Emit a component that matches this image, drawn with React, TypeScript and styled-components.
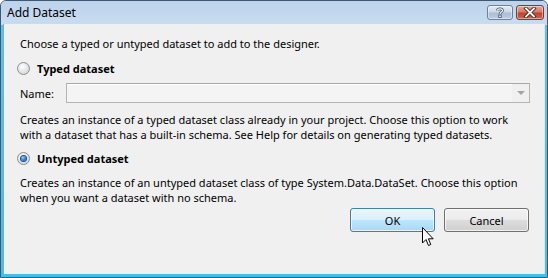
import React from 'react';
import styled, { createGlobalStyle } from 'styled-components';

const Global = createGlobalStyle`
    html, body {
        margin: 0;
        padding: 0;
        background: #ffffff;
    }
    body {
        font-family: "Noto Sans", "Open Sans", sans-serif;
        font-size: 11px;
        color: #000;
    }
`

const Window = styled.div`
    position: relative;
    width: 548px;
    height: 278px;
    box-sizing: border-box;
    border: 1px solid #3f5872;
    border-radius: 6px 6px 0 0;
    background: linear-gradient(to bottom, #b9d1ea 0px, #c6daf0 24px, #55c6ec 24px, #42bfe8 100%);
    display: flex;
    flex-direction: column;
    overflow: hidden;
`

const TitleBar = styled.div`
    height: 23px;
    display: flex;
    align-items: flex-start;
    padding: 0 3px 0 6px;
    flex-shrink: 0;
    background: linear-gradient(to bottom, #bcd3eb, #c8dcf1);
`

const Title = styled.div`
    font-size: 12px;
    line-height: 23px;
    flex: 1;
    color: #000;
`

const Caption = styled.div`
    display: flex;
    gap: 3px;
    margin-top: 4px;
`

const CapButton = styled.div<{ $close?: boolean }>`
    width: ${p => (p.$close ? 28 : 26)}px;
    height: 15px;
    box-sizing: border-box;
    border-radius: 3px;
    border: 1px solid ${p => (p.$close ? '#7a3c33' : '#6d819b')};
    background: ${p =>
        p.$close
            ? 'linear-gradient(to bottom, #e6a89d 0%, #d77a68 45%, #c0432c 55%, #d3624a 100%)'
            : 'linear-gradient(to bottom, #e2ebf5 0%, #cad9ea 45%, #a9bed6 55%, #bccde2 100%)'};
    box-shadow: inset 0 0 0 1px rgba(255, 255, 255, 0.45);
    display: flex;
    align-items: center;
    justify-content: center;
`

const Client = styled.div`
    flex: 1;
    margin: 0 2px 3px 2px;
    background: #f0f0f0;
    border-left: 1px solid #8fa6bd;
    border-right: 1px solid #dfe6ee;
    display: flex;
    flex-direction: column;
    padding: 12px 14px 0 16px;
`

const Text = styled.div<{ $mt?: number }>`
    line-height: 15px;
    margin-top: ${p => p.$mt || 0}px;
    white-space: nowrap;
`

const RadioRow = styled.div<{ $mt: number }>`
    display: flex;
    align-items: center;
    height: 15px;
    margin-top: ${p => p.$mt}px;
    margin-left: -3px;
    gap: 7px;
`

const RadioCircle = styled.div<{ $checked?: boolean }>`
    width: 13px;
    height: 13px;
    box-sizing: border-box;
    border-radius: 50%;
    border: 1px solid #8b8e92;
    background: radial-gradient(circle at 40% 35%, #ffffff 0%, #e8e8e8 45%, #c9cbcd 100%);
    display: flex;
    align-items: center;
    justify-content: center;
    &::after {
        content: '';
        display: ${p => (p.$checked ? 'block' : 'none')};
        width: 5px;
        height: 5px;
        border-radius: 50%;
        background: radial-gradient(circle at 40% 35%, #8fd3fb 0%, #2a7bd0 55%, #0f3e86 100%);
        box-shadow: 0 0 0 1px #1c4f8f;
    }
`

const Label = styled.span`
    font-weight: 700;
    line-height: 15px;
`

const NameRow = styled.div`
    display: flex;
    align-items: center;
    margin-top: 7px;
    height: 20px;
    gap: 12px;
`

const Combo = styled.div`
    flex: 1;
    height: 20px;
    box-sizing: border-box;
    border: 1px solid #b4b4b4;
    border-top-color: #a8a8a8;
    background: #f4f4f4;
    box-shadow: inset 0 1px 0 #ffffff;
    display: flex;
    justify-content: flex-end;
    align-items: center;
`

const DropArea = styled.div`
    width: 17px;
    height: 18px;
    background: #f0f0f0;
    display: flex;
    align-items: center;
    justify-content: center;
    &::after {
        content: '';
        border-left: 4px solid transparent;
        border-right: 4px solid transparent;
        border-top: 4px solid #a4a4a4;
    }
`

const ButtonRow = styled.div`
    display: flex;
    justify-content: flex-end;
    gap: 9px;
    margin-top: 3px;
    margin-right: 1px;
`

const Button = styled.div<{ $focused?: boolean }>`
    width: 85px;
    height: 24px;
    box-sizing: border-box;
    border-radius: 3px;
    border: 1px solid ${p => (p.$focused ? '#3c7fb1' : '#707070')};
    background: ${p =>
        p.$focused
            ? 'linear-gradient(to bottom, #eaf6fd 0%, #d9f0fc 50%, #bee6fd 51%, #a7d9f5 100%)'
            : 'linear-gradient(to bottom, #f2f2f2 0%, #ebebeb 50%, #dddddd 51%, #cfcfcf 100%)'};
    box-shadow: inset 0 0 0 1px rgba(255, 255, 255, 0.7);
    display: flex;
    align-items: center;
    justify-content: center;
    font-size: 11px;
`

const Cursor = styled.svg`
    position: absolute;
    left: 421px;
    top: 226px;
`

function App() {
    return (
        <>
            <Global />
            <Window>
                <TitleBar>
                    <Title>Add Dataset</Title>
                    <Caption>
                        <CapButton>
                            <svg width="10" height="11" viewBox="0 0 10 11">
                                <path d="M2.5 3.5 C2.5 1.5 7.5 1.2 7.5 3.5 C7.5 5 5 5 5 7" fill="none" stroke="#34495f" strokeWidth="2.6" />
                                <path d="M2.5 3.5 C2.5 1.5 7.5 1.2 7.5 3.5 C7.5 5 5 5 5 7" fill="none" stroke="#ffffff" strokeWidth="1.2" />
                                <rect x="3.8" y="8" width="2.4" height="2.4" fill="#ffffff" stroke="#34495f" strokeWidth="0.8" />
                            </svg>
                        </CapButton>
                        <CapButton $close>
                            <svg width="14" height="11" viewBox="0 0 14 11">
                                <path d="M3 1.5 L11 9.5 M11 1.5 L3 9.5" stroke="#5a2118" strokeWidth="3.6" strokeLinecap="square" />
                                <path d="M3 1.5 L11 9.5 M11 1.5 L3 9.5" stroke="#ffffff" strokeWidth="1.8" strokeLinecap="square" />
                            </svg>
                        </CapButton>
                    </Caption>
                </TitleBar>
                <Client>
                    <Text>Choose a typed or untyped dataset to add to the designer.</Text>
                    <RadioRow $mt={10}>
                        <RadioCircle />
                        <Label>Typed dataset</Label>
                    </RadioRow>
                    <NameRow>
                        <span>Name:</span>
                        <Combo>
                            <DropArea />
                        </Combo>
                    </NameRow>
                    <Text $mt={9}>
                        Creates an instance of a typed dataset class already in your project. Choose this option to work
                    </Text>
                    <Text>with a dataset that has a built-in schema. See Help for details on generating typed datasets.</Text>
                    <RadioRow $mt={9}>
                        <RadioCircle $checked />
                        <Label>Untyped dataset</Label>
                    </RadioRow>
                    <Text $mt={9}>
                        Creates an instance of an untyped dataset class of type System.Data.DataSet. Choose this option
                    </Text>
                    <Text>when you want a dataset with no schema.</Text>
                    <ButtonRow>
                        <Button $focused>OK</Button>
                        <Button>Cancel</Button>
                    </ButtonRow>
                </Client>
                <Cursor width="13" height="20" viewBox="0 0 13 20">
                    <path d="M0.5 0.5 L0.5 16 L4 12.5 L6.5 18.5 L8.8 17.5 L6.4 11.8 L11.2 11.8 Z" fill="#ffffff" stroke="#000000" strokeWidth="1" strokeLinejoin="miter" />
                </Cursor>
            </Window>
        </>
    );
}

export default App;
